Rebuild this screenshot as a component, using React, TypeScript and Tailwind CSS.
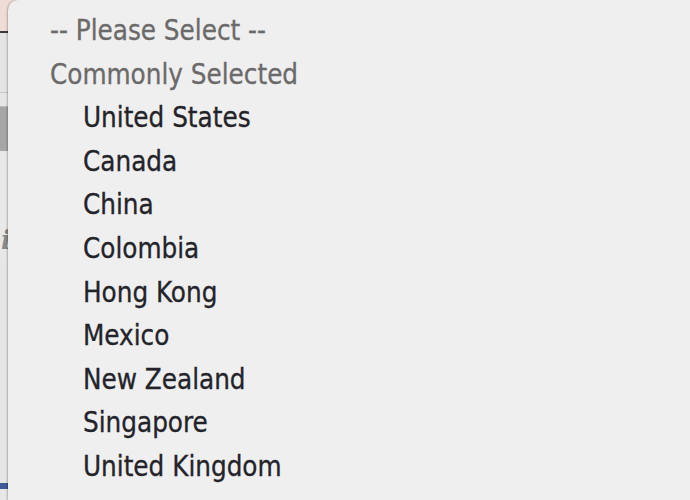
import React from "react";

const items = [
  "United States",
  "Canada",
  "China",
  "Colombia",
  "Hong Kong",
  "Mexico",
  "New Zealand",
  "Singapore",
  "United Kingdom",
];

export default function App() {
  return (
    <div className="relative w-[690px] h-[500px] overflow-hidden bg-[#e9e9e9]">
      {/* page behind the popup */}
      <div className="absolute left-0 top-0 w-[24px] h-[500px] flex flex-col">
        <div className="h-[31px] bg-[#efdcd7]" />
        <div className="h-[2px] bg-[#3a3a3a]" />
        <div className="h-[60px] bg-[#e4e4e4] border-b border-[#c8c8c8]" />
        <div className="h-[14px] bg-[#e6e6e6] border-b border-[#bdbdbd]" />
        <div className="h-[44px] bg-[#a6a6a6]" />
        <div className="h-[72px] bg-[#e8e8e8]" />
        <div className="h-[40px] bg-[#e8e8e8] leading-none">
          <span className="block pl-[1px] pt-[4px] italic font-bold text-[26px] text-[#8a8a8a] [font-family:'DejaVu_Serif',serif]">i</span>
        </div>
        <div className="h-[220px] bg-[#e6e6e6]" />
        <div className="h-[6px] bg-[#3d5b98]" />
        <div className="flex-1 bg-[#e8e8e8]" />
      </div>
      {/* popup */}
      <div className="absolute left-[8px] top-0 right-0 bottom-0 bg-[#f0efef] rounded-tl-[10px] shadow-[-1px_0_2px_rgba(0,0,0,0.25)] pt-[9px] [font-family:'DejaVu_Sans_Condensed','DejaVu_Sans',sans-serif] text-[27.5px] leading-[43.6px] [-webkit-text-stroke:0.3px_currentColor]">
        <div className="pl-[42px] text-[#6b6a6a]">-- Please Select --</div>
        <div className="pl-[42px] text-[#6b6a6a]">Commonly Selected</div>
        {items.map((c) => (
          <div key={c} className="pl-[75px] text-[#23242a]">
            {c}
          </div>
        ))}
      </div>
    </div>
  );
}
